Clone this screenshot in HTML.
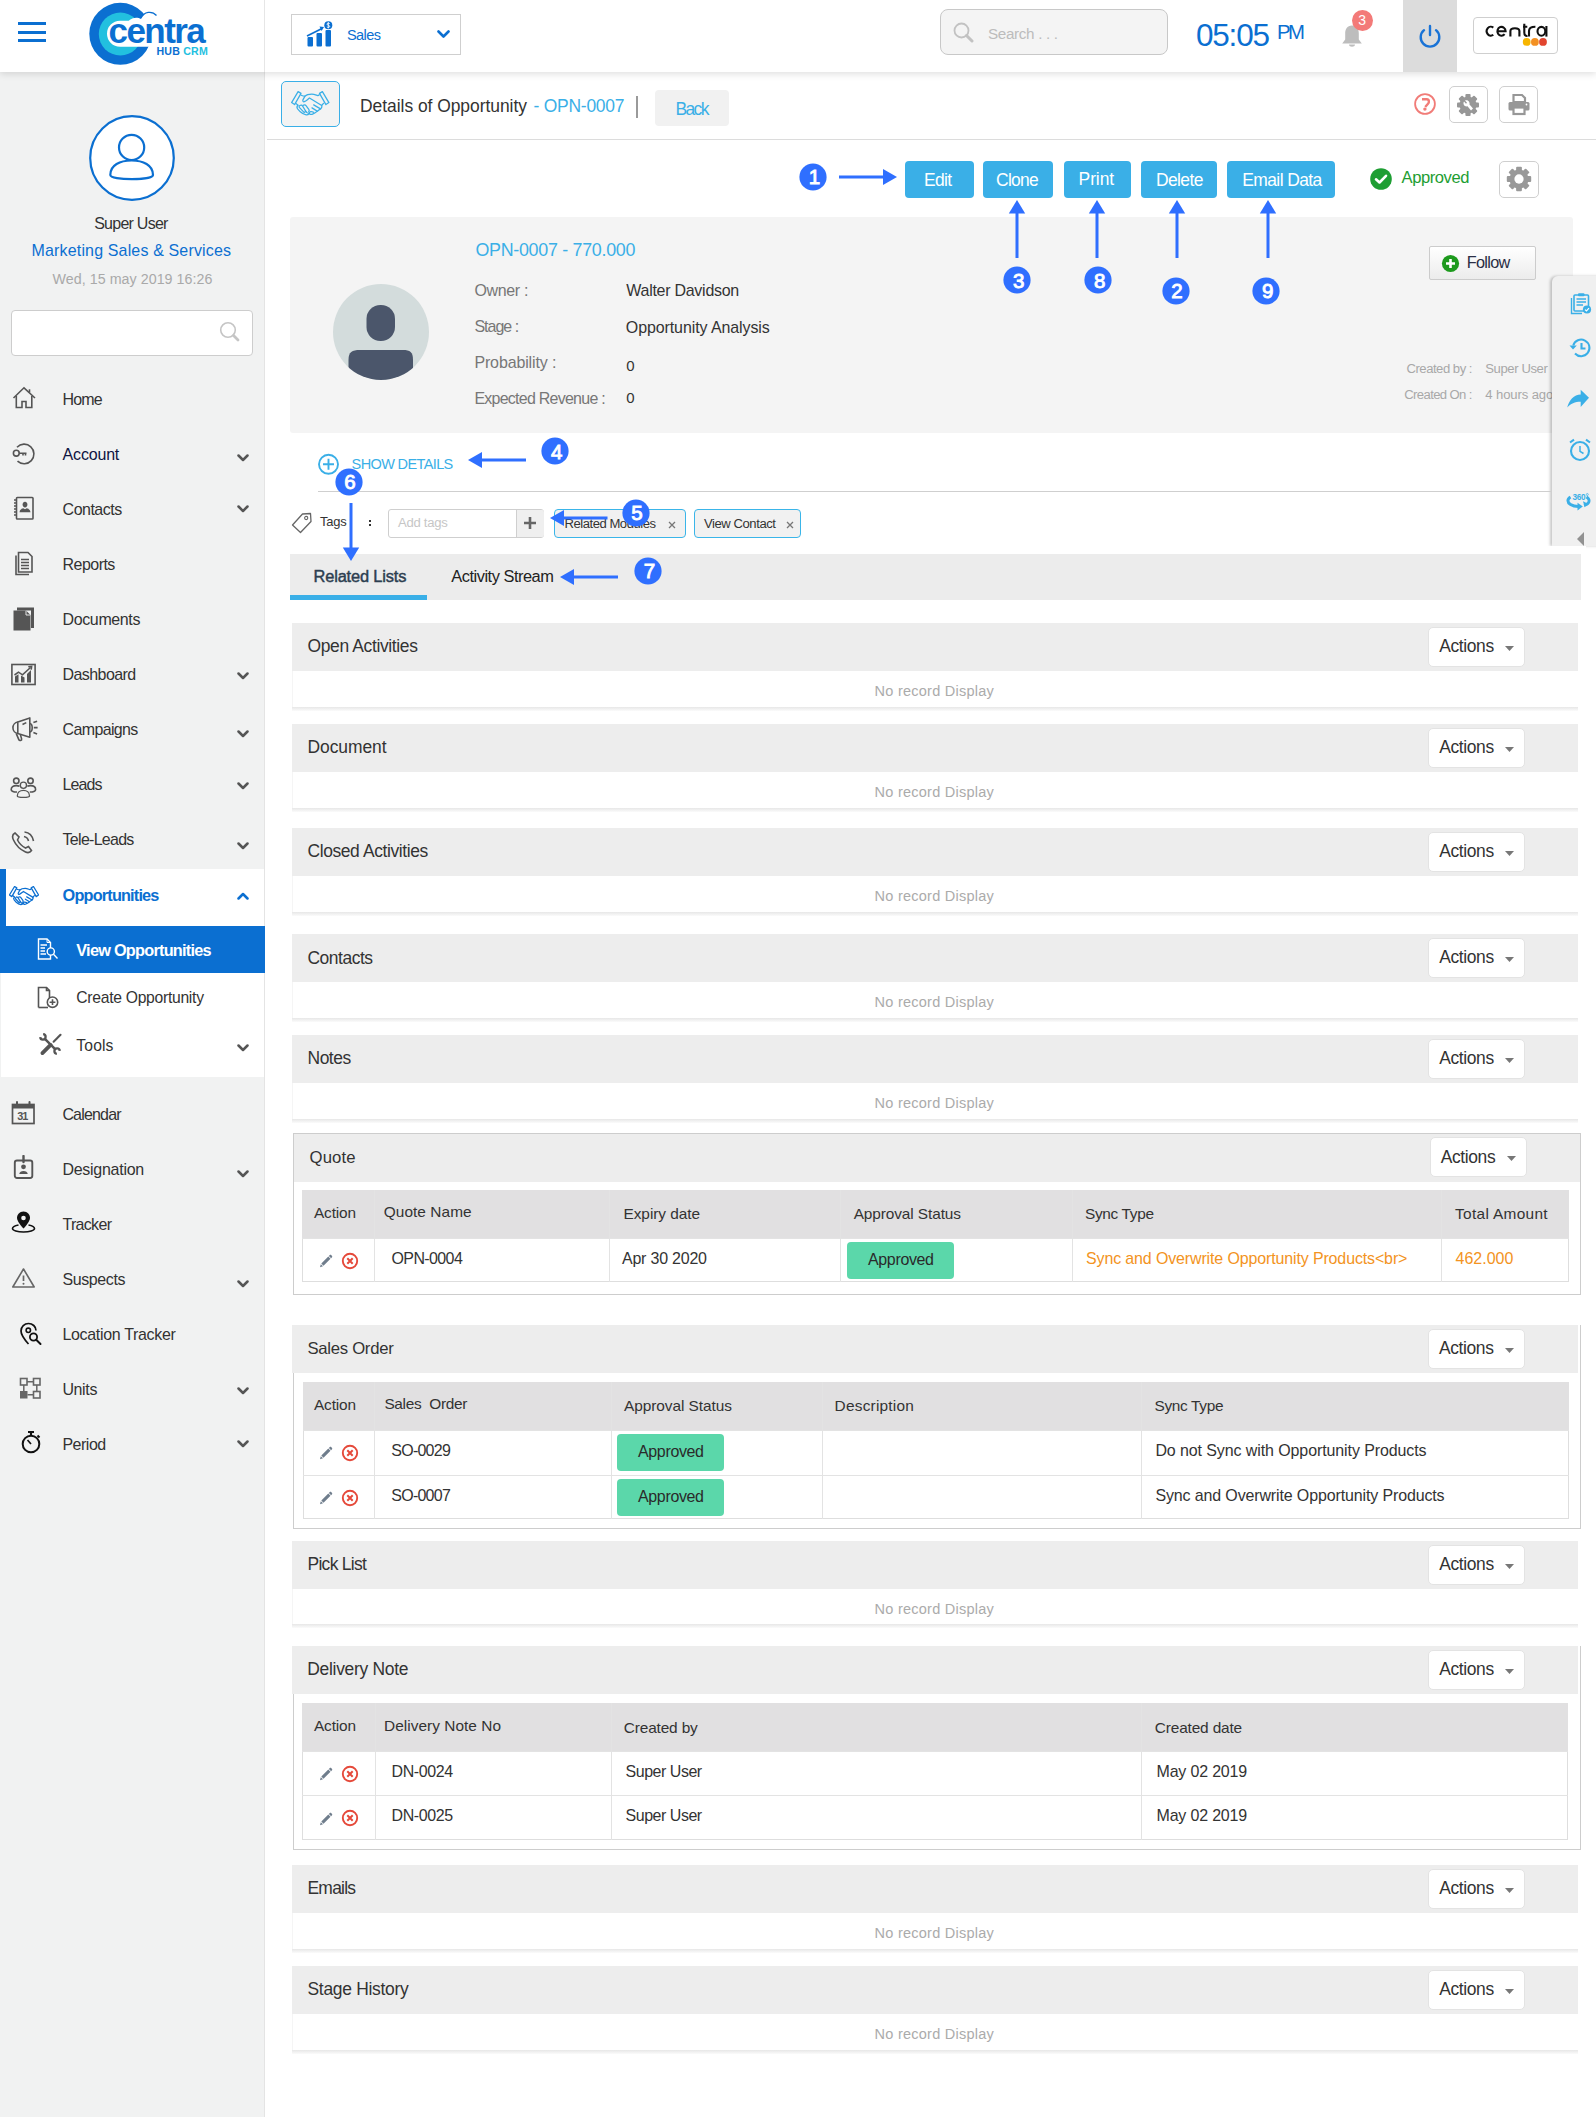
<!DOCTYPE html>
<html><head><meta charset="utf-8"><title>Details of Opportunity</title><style>
*{box-sizing:border-box;margin:0;padding:0}
html,body{width:1596px;height:2117px;overflow:hidden;background:#fff}
body{position:relative;font-family:"Liberation Sans",sans-serif}
.a{position:absolute}
.t{position:absolute;white-space:pre;line-height:1}
</style></head><body>
<div class="a" style="left:0px;top:72px;width:265px;height:2045px;background:#f1f2f2;border-right:1px solid #e4e4e4;"></div>
<div class="a" style="left:0px;top:0px;width:1596px;height:72px;background:#fff;box-shadow:0 2px 7px rgba(0,0,0,0.13);z-index:2;"></div>
<div class="a" style="left:264px;top:0;width:1px;height:72px;background:#e6e6e6;z-index:3"></div>
<div class="a" style="left:18px;top:22px;width:28px;height:3px;background:#0b6fd1;z-index:3"></div>
<div class="a" style="left:18px;top:30.5px;width:28px;height:3px;background:#0b6fd1;z-index:3"></div>
<div class="a" style="left:18px;top:39px;width:28px;height:3px;background:#0b6fd1;z-index:3"></div>
<svg class="a" style="left:86px;top:0px;z-index:3" width="128" height="68" viewBox="0 0 128 68">
<circle cx="34.3" cy="33.8" r="31" fill="#0b6fd1"/>
<circle cx="34.3" cy="34" r="21.5" fill="#22c0df"/>
<path d="M34 20.8 H70 V46.8 H34 A13 13 0 0 1 34 20.8 Z" fill="#fff"/>
<path d="M40 26 C42 18 50 16 55 19 C58 11 68 10 72 16 L75 26 Z" fill="#fff"/>
<path d="M55 18 C58 11.5 66 10.5 70.5 15.5" fill="none" stroke="#0b6fd1" stroke-width="1.3"/>
<path d="M64 46.8 H72 C70 49 66 50 64 50 Z" fill="#fff"/>
</svg>
<div class="t" style="left:108.5px;top:12.5px;font-size:35px;font-weight:bold;color:#0b6fd1;letter-spacing:-1.55px;z-index:3">centra</div>
<div class="t" style="left:156.5px;top:45.6px;font-size:10.6px;font-weight:bold;color:#0b6fd1;letter-spacing:0.2px;z-index:3">HUB <span style="color:#22c0df">CRM</span></div>
<div class="a" style="left:291px;top:14px;width:170px;height:41px;border:1px solid #cfcfcf;background:#fff;z-index:3;"></div>
<svg class="a" style="left:306px;top:21px;z-index:3" width="27" height="28" viewBox="0 0 27 28">
<rect x="1.5" y="16" width="5.5" height="9.5" rx="1" fill="#0b6fd1"/>
<rect x="10.5" y="12" width="5.5" height="13.5" rx="1" fill="#0b6fd1"/>
<rect x="19.5" y="9" width="5.5" height="16.5" rx="1" fill="#0b6fd1"/>
<path d="M1 15 L16 7.5" stroke="#0b6fd1" stroke-width="1.6" fill="none"/>
<path d="M13.5 5.5 L18 6 L15.5 10 Z" fill="#0b6fd1"/>
<circle cx="22.3" cy="4.3" r="4" fill="#0b6fd1"/>
<path d="M23.7 2.6 C23 1.8 21 1.9 21 3.2 C21 4.5 23.7 4 23.7 5.4 C23.7 6.6 21.6 6.7 20.9 5.9 M22.3 1.2 V7.4" stroke="#fff" stroke-width="0.9" fill="none"/>
</svg>
<div class="t" style="left:347.00px;top:28.00px;font-size:14.53px;color:#0b6fd1;letter-spacing:-0.593px;z-index:3;">Sales</div>
<svg class="a" style="left:437px;top:30px;z-index:3" width="13" height="9" viewBox="0 0 13 9"><path d="M1.5 1.5 L6.5 6.5 L11.5 1.5" stroke="#0b6fd1" stroke-width="2.6" fill="none" stroke-linecap="round" stroke-linejoin="round"/></svg>
<div class="a" style="left:940px;top:9px;width:228px;height:46px;border:1px solid #c8c8c8;background:#f4f4f4;border-radius:8px;z-index:3;"></div>
<svg class="a" style="left:953px;top:22px;z-index:3" width="22" height="21" viewBox="0 0 22 21"><circle cx="8.5" cy="8.5" r="7" stroke="#c2c2c2" stroke-width="1.8" fill="none"/><path d="M13.5 13.5 L19 19" stroke="#c2c2c2" stroke-width="3" stroke-linecap="round"/></svg>
<div class="t" style="left:988.00px;top:26.00px;font-size:15.26px;color:#bcbcbc;letter-spacing:-0.345px;z-index:3;">Search . . .</div>
<div class="t" style="left:1196.00px;top:20.00px;font-size:31.50px;color:#0b6fd1;letter-spacing:-1.207px;z-index:3;">05:05</div>
<div class="t" style="left:1277.00px;top:22.00px;font-size:20.35px;color:#0b6fd1;letter-spacing:-2.523px;z-index:3;">PM</div>
<svg class="a" style="left:1340px;top:24px;z-index:3" width="26" height="25" viewBox="0 0 26 25">
<path d="M12 1.5 C7 1.5 5.2 5.5 5.2 9.5 V15.5 L2.2 19.5 H21.8 L18.8 15.5 V9.5 C18.8 5.5 17 1.5 12 1.5 Z" fill="#bdbdbd"/>
<path d="M9 20.5 C9 23.5 15 23.5 15 20.5 Z" fill="#bdbdbd"/>
</svg>
<div class="a" style="left:1351.5px;top:9.5px;width:21px;height:21px;background:#f37a78;border-radius:50%;z-index:4;"></div>
<div class="t" style="left:1358.30px;top:13.00px;font-size:14.00px;color:#fff;z-index:5;">3</div>
<div class="a" style="left:1403px;top:0px;width:54px;height:72px;background:#dcdcdc;z-index:3;"></div>
<svg class="a" style="left:1418px;top:24px;z-index:4" width="24" height="24" viewBox="0 0 24 24"><path d="M6 6.2 A9.3 9.3 0 1 0 18 6.2" stroke="#1a73d6" stroke-width="2.4" fill="none" stroke-linecap="round"/><path d="M12 2 V11" stroke="#1a73d6" stroke-width="2.4" stroke-linecap="round"/></svg>
<div class="a" style="left:1472.5px;top:17px;width:85px;height:36.5px;border:1px solid #cfcfcf;border-radius:4px;background:#fff;z-index:3;"></div>
<svg class="a" style="left:1472.5px;top:17px;z-index:4" width="85" height="36" viewBox="0 0 85 36"><g fill="none" stroke="#111" stroke-width="2.1" stroke-linecap="butt"><path d="M20.3 10.6 A4.1 4.5 0 1 0 20.3 17.8"/><path d="M24.4 14.2 H32.6 A4.1 4.4 0 1 0 31.6 17.2"/><path d="M37.4 19.6 V14 C37.4 10.3 46.4 10.3 46.4 14 V19.6"/><path d="M50 9.8 H54.3 M51.3 6.8 V15.5 C51.3 18 52.5 19.2 54.5 19"/><path d="M56 19.6 V14 C56 11 58.5 9.8 62.4 9.8"/><ellipse cx="68.4" cy="14.3" rx="3.9" ry="4.4"/><path d="M73.4 9 V19.6"/></g></svg>
<svg class="a" style="left:1521px;top:36px;z-index:4" width="28" height="12" viewBox="0 0 28 12"><circle cx="5.7" cy="5.9" r="3.9" fill="#f7b500"/><circle cx="13.9" cy="5.9" r="3.9" fill="#f39022"/><circle cx="22" cy="5.9" r="3.9" fill="#e2452f"/></svg>
<svg class="a" style="left:88px;top:114px;" width="88" height="88" viewBox="0 0 88 88">
<circle cx="44" cy="44" r="41.8" fill="#fff" stroke="#0b6fd1" stroke-width="2.2"/>
<circle cx="43.6" cy="33.4" r="12.6" fill="none" stroke="#0b6fd1" stroke-width="2.2"/>
<path d="M22.3 61 C22.3 51 32 46.5 43.6 46.5 C55 46.5 65 51 65 61 C65 66.5 22.3 66.5 22.3 61 Z" fill="none" stroke="#0b6fd1" stroke-width="2.2"/>
</svg>
<div class="t" style="left:94.20px;top:216.00px;font-size:15.99px;color:#333;letter-spacing:-0.740px;">Super User</div>
<div class="t" style="left:31.60px;top:243.00px;font-size:15.99px;color:#0b6fd1;letter-spacing:0.156px;">Marketing Sales &amp; Services</div>
<div class="t" style="left:52.50px;top:272.00px;font-size:14.24px;color:#a9a9a9;letter-spacing:0.053px;">Wed, 15 may 2019 16:26</div>
<div class="a" style="left:11px;top:310px;width:242px;height:46px;border:1px solid #cdcdcd;border-radius:4px;background:#fff;"></div>
<svg class="a" style="left:219px;top:321px;" width="22" height="22" viewBox="0 0 22 22"><circle cx="9" cy="9" r="7.3" stroke="#c5c5c5" stroke-width="1.6" fill="none"/><path d="M14.5 14.5 L19 19" stroke="#c5c5c5" stroke-width="2.8" stroke-linecap="round"/></svg>
<div class="t" style="left:62.60px;top:392.00px;font-size:15.99px;color:#333;letter-spacing:-0.883px;">Home</div>
<div class="t" style="left:62.60px;top:447.00px;font-size:15.99px;color:#0f1442;letter-spacing:-0.176px;">Account</div>
<svg class="a" style="left:237px;top:453.5px;" width="12" height="8" viewBox="0 0 12 8"><path d="M1.5 1.5 L6 6 L10.5 1.5" stroke="#555" stroke-width="2.5" fill="none" stroke-linecap="round" stroke-linejoin="round"/></svg>
<div class="t" style="left:62.60px;top:502.00px;font-size:15.99px;color:#333;letter-spacing:-0.502px;">Contacts</div>
<svg class="a" style="left:237px;top:505.1px;" width="12" height="8" viewBox="0 0 12 8"><path d="M1.5 1.5 L6 6 L10.5 1.5" stroke="#555" stroke-width="2.5" fill="none" stroke-linecap="round" stroke-linejoin="round"/></svg>
<div class="t" style="left:62.60px;top:557.00px;font-size:15.99px;color:#333;letter-spacing:-0.533px;">Reports</div>
<div class="t" style="left:62.60px;top:612.00px;font-size:15.99px;color:#333;letter-spacing:-0.383px;">Documents</div>
<div class="t" style="left:62.60px;top:667.00px;font-size:15.99px;color:#333;letter-spacing:-0.578px;">Dashboard</div>
<svg class="a" style="left:237px;top:671.7px;" width="12" height="8" viewBox="0 0 12 8"><path d="M1.5 1.5 L6 6 L10.5 1.5" stroke="#555" stroke-width="2.5" fill="none" stroke-linecap="round" stroke-linejoin="round"/></svg>
<div class="t" style="left:62.60px;top:722.00px;font-size:15.99px;color:#333;letter-spacing:-0.645px;">Campaigns</div>
<svg class="a" style="left:237px;top:730.1px;" width="12" height="8" viewBox="0 0 12 8"><path d="M1.5 1.5 L6 6 L10.5 1.5" stroke="#555" stroke-width="2.5" fill="none" stroke-linecap="round" stroke-linejoin="round"/></svg>
<div class="t" style="left:62.60px;top:777.00px;font-size:15.99px;color:#333;letter-spacing:-0.942px;">Leads</div>
<svg class="a" style="left:237px;top:782.2px;" width="12" height="8" viewBox="0 0 12 8"><path d="M1.5 1.5 L6 6 L10.5 1.5" stroke="#555" stroke-width="2.5" fill="none" stroke-linecap="round" stroke-linejoin="round"/></svg>
<div class="t" style="left:62.60px;top:832.00px;font-size:15.99px;color:#333;letter-spacing:-0.714px;">Tele-Leads</div>
<svg class="a" style="left:237px;top:842.3px;" width="12" height="8" viewBox="0 0 12 8"><path d="M1.5 1.5 L6 6 L10.5 1.5" stroke="#555" stroke-width="2.5" fill="none" stroke-linecap="round" stroke-linejoin="round"/></svg>
<div class="t" style="left:62.40px;top:1107.00px;font-size:15.99px;color:#333;letter-spacing:-0.810px;">Calendar</div>
<div class="t" style="left:62.40px;top:1162.00px;font-size:15.99px;color:#333;letter-spacing:-0.256px;">Designation</div>
<svg class="a" style="left:237px;top:1170.3px;" width="12" height="8" viewBox="0 0 12 8"><path d="M1.5 1.5 L6 6 L10.5 1.5" stroke="#555" stroke-width="2.5" fill="none" stroke-linecap="round" stroke-linejoin="round"/></svg>
<div class="t" style="left:62.40px;top:1217.00px;font-size:15.99px;color:#333;letter-spacing:-0.667px;">Tracker</div>
<div class="t" style="left:62.40px;top:1272.00px;font-size:15.99px;color:#333;letter-spacing:-0.379px;">Suspects</div>
<svg class="a" style="left:237px;top:1279.7px;" width="12" height="8" viewBox="0 0 12 8"><path d="M1.5 1.5 L6 6 L10.5 1.5" stroke="#555" stroke-width="2.5" fill="none" stroke-linecap="round" stroke-linejoin="round"/></svg>
<div class="t" style="left:62.40px;top:1327.00px;font-size:15.99px;color:#333;letter-spacing:-0.313px;">Location Tracker</div>
<div class="t" style="left:62.40px;top:1382.00px;font-size:15.99px;color:#333;letter-spacing:-0.353px;">Units</div>
<svg class="a" style="left:237px;top:1387.3px;" width="12" height="8" viewBox="0 0 12 8"><path d="M1.5 1.5 L6 6 L10.5 1.5" stroke="#555" stroke-width="2.5" fill="none" stroke-linecap="round" stroke-linejoin="round"/></svg>
<div class="t" style="left:62.40px;top:1437.00px;font-size:15.99px;color:#333;letter-spacing:-0.481px;">Period</div>
<svg class="a" style="left:237px;top:1439.7px;" width="12" height="8" viewBox="0 0 12 8"><path d="M1.5 1.5 L6 6 L10.5 1.5" stroke="#555" stroke-width="2.5" fill="none" stroke-linecap="round" stroke-linejoin="round"/></svg>
<div class="a" style="left:1px;top:869px;width:263px;height:208px;background:#fff;"></div>
<div class="a" style="left:0px;top:869px;width:6px;height:57px;background:#0b6fd1;"></div>
<div class="a" style="left:0px;top:926px;width:265px;height:47px;background:#0b6fd1;"></div>
<div class="t" style="left:62.60px;top:887.00px;font-size:16.30px;color:#0b6fd1;letter-spacing:-0.829px;font-weight:bold;">Opportunities</div>
<svg class="a" style="left:237px;top:891.7px;" width="12" height="8" viewBox="0 0 12 8"><path d="M1.5 6.5 L6 2 L10.5 6.5" stroke="#0b6fd1" stroke-width="2.5" fill="none" stroke-linecap="round" stroke-linejoin="round"/></svg>
<div class="t" style="left:76.30px;top:942.00px;font-size:16.30px;color:#fff;letter-spacing:-0.750px;font-weight:bold;">View Opportunities</div>
<div class="t" style="left:76.30px;top:990.00px;font-size:15.70px;color:#333;letter-spacing:-0.285px;">Create Opportunity</div>
<div class="t" style="left:76.30px;top:1038.00px;font-size:15.70px;color:#333;letter-spacing:0.136px;">Tools</div>
<svg class="a" style="left:237px;top:1044.3px;" width="12" height="8" viewBox="0 0 12 8"><path d="M1.5 1.5 L6 6 L10.5 1.5" stroke="#555" stroke-width="2.5" fill="none" stroke-linecap="round" stroke-linejoin="round"/></svg>
<svg class="a" style="left:12px;top:386px;" width="25" height="24" viewBox="0 0 25 24"><path d="M1.5 12 L12 1.8 L23 12" stroke="#555" fill="none" stroke-width="1.6" stroke-width="1.7"/><path d="M17.5 6.5 V3.3" stroke="#555" fill="none" stroke-width="1.6"/><path d="M4.3 10 V21.5 H10 V15.5 H14 V21.5 H19.8 V10" stroke="#555" fill="none" stroke-width="1.6" stroke-width="2.2"/></svg>
<svg class="a" style="left:12px;top:442px;" width="24" height="24" viewBox="0 0 24 24"><path d="M5 5.2 A9.8 9.8 0 1 1 5.5 19.2" stroke="#555" fill="none" stroke-width="1.6" stroke-width="2"/><circle cx="4.3" cy="11.2" r="2.9" stroke="#555" fill="none" stroke-width="1.6" stroke-width="1.8"/><path d="M7.2 11.2 H14.5 M11 11.2 V13.5 M13.5 11.2 V13.5" stroke="#555" fill="none" stroke-width="1.6" stroke-width="1.8"/></svg>
<svg class="a" style="left:13px;top:496px;" width="22" height="25" viewBox="0 0 22 25"><rect x="3.5" y="1.5" width="16.5" height="21.5" rx="0.8" stroke="#555" fill="none" stroke-width="1.6" stroke-width="1.9"/><path d="M1 4 H4 M1 7 H4 M1 10 H4 M1 13 H4 M1 16 H4 M1 19 H4" stroke="#555" fill="none" stroke-width="1.6" stroke-width="1.2"/><path d="M12 5.8 C10.3 5.8 9.6 7.2 9.6 8.6 C9.6 10.2 10.5 11.5 12 11.5 C13.5 11.5 14.4 10.2 14.4 8.6 C14.4 7.2 13.7 5.8 12 5.8 Z" fill="#555"/><path d="M6.5 16.3 C6.8 13.5 8.5 12.6 10.3 12.2 L12 13.3 L13.7 12.2 C15.5 12.6 17.2 13.5 17.5 16.3 Z" fill="#555"/></svg>
<svg class="a" style="left:13px;top:551px;" width="22" height="26" viewBox="0 0 22 26"><path d="M3 4.5 V23.5 H16" stroke="#555" fill="none" stroke-width="1.6" stroke-width="1.4"/><path d="M5.5 1.5 H15 L19 5.5 V21 H5.5 Z" stroke="#555" fill="none" stroke-width="1.6" stroke-width="1.5"/><path d="M8 8.5 H16 M8 11.5 H16 M8 14.5 H16 M8 17.5 H16" stroke="#555" fill="none" stroke-width="1.6" stroke-width="1.3"/></svg>
<svg class="a" style="left:13px;top:606px;" width="22" height="25" viewBox="0 0 22 25"><path d="M4 1.5 H21 V22 H18 V4.5 H4 Z" fill="#555"/><path d="M0.5 4.5 H13 L17.5 9 V24.5 H0.5 Z" fill="#555"/><path d="M13 4.8 V9 H17.3" fill="none" stroke="#f1f2f2" stroke-width="0.9"/></svg>
<svg class="a" style="left:10px;top:663px;" width="27" height="23" viewBox="0 0 27 23"><rect x="1.9" y="1.5" width="23.2" height="20" stroke="#555" fill="none" stroke-width="1.6" stroke-width="1.9"/><path d="M5 19.5 V13.5 L8.5 11.2 V19.5 Z M11 19.5 V12.5 L14.5 14.5 V19.5 Z M17 19.5 V11 L21 7 V19.5 Z" fill="#555"/><path d="M4.5 12 L8.5 9.2 L12.5 11.8 L20.5 4.5" stroke="#555" fill="none" stroke-width="1.6" stroke-width="1.1"/><path d="M18.3 3.8 L21.6 3.4 L21.2 6.7" stroke="#555" fill="none" stroke-width="1.6" stroke-width="1.1"/></svg>
<svg class="a" style="left:9px;top:716px;" width="31" height="27" viewBox="0 0 31 27"><path d="M8.8 6 A5.6 5.8 0 0 0 8.8 17.5" stroke="#555" fill="none" stroke-width="1.6" stroke-width="1.5"/><path d="M8.8 6 L20.8 1.9 V21.2 L8.8 17.5 Z" stroke="#555" fill="none" stroke-width="1.6" stroke-width="1.5" stroke-linejoin="round"/><path d="M20.8 7.5 C24 8 24 15.5 20.8 16" stroke="#555" fill="none" stroke-width="1.6" stroke-width="1.4"/><path d="M24.4 6.6 L28.1 5.2 M24.8 11.6 H28.6 M24.4 16.5 L28.1 17.9" stroke="#555" fill="none" stroke-width="1.6" stroke-width="1.4"/><path d="M7.3 17.6 L9.8 23.6 C10.5 25.2 13 24.6 12.6 22.9 L11.4 18.6" stroke="#555" fill="none" stroke-width="1.6" stroke-width="1.4"/><path d="M13.5 8.5 L17.3 6.6" stroke="#555" fill="none" stroke-width="1.6" stroke-width="1.2"/></svg>
<svg class="a" style="left:10px;top:772px;" width="28" height="28" viewBox="0 0 28 28"><circle cx="6.3" cy="8.8" r="2.7" stroke="#555" fill="none" stroke-width="1.6" stroke-width="1.3"/><circle cx="20.5" cy="8.8" r="2.7" stroke="#555" fill="none" stroke-width="1.6" stroke-width="1.3"/><path d="M9.5 14.3 C8.5 13.8 7.5 13.6 6.3 13.6 C3.2 13.6 1.2 15.3 1.2 17.4 C1.2 19.2 3.5 20 7 20" stroke="#555" fill="none" stroke-width="1.6" stroke-width="1.3"/><path d="M17.3 14.3 C18.3 13.8 19.3 13.6 20.5 13.6 C23.6 13.6 25.6 15.3 25.6 17.4 C25.6 19.2 23.3 20 19.8 20" stroke="#555" fill="none" stroke-width="1.6" stroke-width="1.3"/><circle cx="13.4" cy="13.2" r="3.1" fill="#f1f2f2" stroke="#555" stroke-width="1.3"/><path d="M7.3 24 C7.3 20.5 10 18.3 13.4 18.3 C16.8 18.3 19.5 20.5 19.5 24 C19.5 25.8 7.3 25.8 7.3 24 Z" fill="#f1f2f2" stroke="#555" stroke-width="1.3"/></svg>
<svg class="a" style="left:11px;top:829.5px;" width="24" height="25" viewBox="0 0 24 25"><path d="M4 3 C2 4 0.8 6.5 2.5 10 C5 15.5 9 19.5 14.5 22 C17.5 23.3 19.5 22 20.5 20.5 L17.5 16.5 L14.5 18 C11.5 16.5 8 13 6.5 10 L8 7 Z" stroke="#555" fill="none" stroke-width="1.6" stroke-width="1.4"/><path d="M13 6.5 C15.5 7 17 8.5 17.5 11" stroke="#555" fill="none" stroke-width="1.6" stroke-width="1.4"/><path d="M13.5 2 C18 2.5 21.5 6 22.5 11" stroke="#555" fill="none" stroke-width="1.6" stroke-width="1.4"/></svg>
<svg class="a" style="left:8.6px;top:886.2px;" width="30.42" height="19.5" viewBox="0 0 30.42 19.5"><g transform="scale(0.78)" stroke="#0b6fd1" fill="none" stroke-width="1.6" stroke-linejoin="round" stroke-linecap="round">
<path d="M7.1 0.6 L10 2.4 L3.6 13.6 L0.6 11.6 Z"/>
<path d="M31.4 0.6 L28.5 2.4 L34.9 13.6 L37.9 11.6 Z"/>
<path d="M10.2 4.2 C11.5 4.8 12.8 5.1 14 5.1 C15.5 3.6 18 3.1 20.8 3.1 C23.5 3.1 25.5 4.4 26.8 4.7 C27.5 4.6 27.9 4.2 28.3 3.8"/>
<path d="M14 5.1 L11.9 8.9 C11.5 10 12.3 11 13.3 10.7 C15 10.2 16.5 8.5 18.5 7 L30.3 14.3 C31.3 15 31 16.6 29.6 17.9"/>
<path d="M32.5 12.3 L30.6 14.5"/>
<path d="M29.6 17.9 C28.2 18.5 27.3 19.6 26.1 20.4 C24.8 21.6 23.2 22.6 21 23.4 C19.6 23.7 18.4 23.2 18.4 22.3 C18.4 20.6 20.2 19.9 22.6 21.3"/>
<path d="M22.7 13.9 L29.1 17.6 M21 16.9 L26.2 20.1"/>
<path d="M5.2 12.6 L6.9 14.2"/>
<path d="M6.9 14.2 C5.8 15.3 5.7 16.6 6.6 17.8 L9.3 20.8 C11.2 22.6 13.6 23.7 15.2 23.9 C16.4 24 17.6 23.3 18.4 22.3"/>
<path d="M8.9 14.6 C9.8 13.8 10.9 14 11.5 14.9 L14.3 19.5 C14.9 20.6 13.9 21.7 12.8 21.1 L8.3 16.4 C7.8 15.8 8.2 15.1 8.9 14.6 Z"/>
<path d="M12.3 14.3 C13 13.6 14.3 13.7 15 14.6 L17.8 18.3 C18.4 19.2 18.3 20.2 17.6 20.9"/>
<path d="M14.5 19.8 L15.8 21.5 C16.3 22.2 17.5 22.3 18.4 22.3"/>
</g></svg>
<svg class="a" style="left:37px;top:938px;" width="23" height="22" viewBox="0 0 23 22"><path d="M1.5 1 H10 L13.5 4.5 V21 H1.5 Z" stroke="#fff" fill="none" stroke-width="1.4"/><path d="M10 1 V4.5 H13.5" stroke="#fff" fill="none" stroke-width="1"/><path d="M3.5 7 H10 M3.5 10 H8 M3.5 13 H8 M3.5 16 H9" stroke="#fff" stroke-width="1.3"/><circle cx="13.8" cy="13.5" r="3.6" stroke="#fff" fill="#0b6fd1" stroke-width="1.4"/><path d="M16.5 16.3 L20.5 20.5" stroke="#fff" stroke-width="1.4"/></svg>
<svg class="a" style="left:37px;top:986px;" width="23" height="23" viewBox="0 0 23 23"><path d="M1.5 21.5 V1.5 H9.5 L12.5 4.5 V12" stroke="#555" fill="none" stroke-width="1.6" stroke-width="1.4"/><path d="M9.5 1.5 V4.5 H12.5" stroke="#555" fill="none" stroke-width="1.6" stroke-width="1"/><path d="M11 21.5 H1.5" stroke="#555" fill="none" stroke-width="1.6" stroke-width="1.4"/><circle cx="15.5" cy="16.2" r="5.2" stroke="#555" fill="none" stroke-width="1.6" stroke-width="1.4"/><path d="M15.5 13.3 V19.1 M12.6 16.2 H18.4" stroke="#555" fill="none" stroke-width="1.6" stroke-width="1.3"/></svg>
<svg class="a" style="left:39px;top:1033px;" width="23" height="23" viewBox="0 0 23 23"><path d="M21.5 1.8 L14.6 8.7" stroke="#555" stroke-width="2.1" stroke-linecap="round"/><path d="M11.6 11.9 L3.4 20.1" stroke="#555" stroke-width="3.8" stroke-linecap="round"/><path d="M5.6 5.6 L16.4 16.4" stroke="#555" stroke-width="2.5"/><path d="M4.13 1.21 A2.7 2.7 0 1 1 1.21 4.14" fill="none" stroke="#555" stroke-width="2.3"/><path d="M17.86 20.79 A2.7 2.7 0 1 1 20.79 17.86" fill="none" stroke="#555" stroke-width="2.3"/></svg>
<svg class="a" style="left:11px;top:1101px;" width="25" height="24" viewBox="0 0 25 24"><rect x="1.5" y="3.5" width="21.5" height="19" fill="none" stroke="#555" stroke-width="1.7"/><rect x="1.5" y="3.5" width="21.5" height="4" fill="#555"/><path d="M6 1 V5 M18.5 1 V5" stroke="#555" stroke-width="2" stroke-linecap="round"/></svg>
<div class="t" style="left:17.30px;top:1111.00px;font-size:10.90px;color:#555;letter-spacing:-1.128px;font-weight:bold;">31</div>
<svg class="a" style="left:13px;top:1155px;" width="22" height="25" viewBox="0 0 22 25"><rect x="1.8" y="5.5" width="17.5" height="17.5" rx="2.2" fill="none" stroke="#555" stroke-width="1.9"/><path d="M10.5 1 V7" stroke="#555" stroke-width="2.4" stroke-linecap="round"/><circle cx="10.5" cy="11.8" r="2.4" fill="#555"/><path d="M6.3 19 C6.3 15 14.7 15 14.7 19 Z" fill="#555"/></svg>
<svg class="a" style="left:11px;top:1210px;" width="25" height="25" viewBox="0 0 25 25"><path d="M12.5 1.5 C8.5 1.5 6 4.5 6 8 C6 12 12.5 18.5 12.5 18.5 C12.5 18.5 19 12 19 8 C19 4.5 16.5 1.5 12.5 1.5 Z" fill="#111"/><circle cx="12.5" cy="8" r="2.3" fill="#f1f2f2"/><path d="M7.5 15 C3.5 15.8 1.5 17 1.5 18.5 C1.5 20.5 6.5 22 12.5 22 C18.5 22 23.5 20.5 23.5 18.5 C23.5 17 21.5 15.8 17.5 15" fill="none" stroke="#111" stroke-width="1.6"/></svg>
<svg class="a" style="left:11px;top:1267px;" width="25" height="22" viewBox="0 0 25 22"><path d="M12.5 2 L1.8 20 H23.2 Z" fill="none" stroke="#666" stroke-width="1.6" stroke-linejoin="round"/><path d="M12.5 8.5 V14" stroke="#666" stroke-width="1.7"/><circle cx="12.5" cy="16.8" r="1" fill="#666"/></svg>
<svg class="a" style="left:19px;top:1322px;" width="25" height="25" viewBox="0 0 25 25"><path d="M9.5 22 C5 17 2 13 2 9 C2 4.5 5.5 1.5 9.5 1.5 C13.5 1.5 17 4.5 17 8.5" fill="none" stroke="#111" stroke-width="1.7"/><circle cx="9.3" cy="8.3" r="2.2" fill="none" stroke="#111" stroke-width="1.6"/><circle cx="14.5" cy="15" r="3.6" fill="none" stroke="#111" stroke-width="1.8"/><path d="M17.2 17.8 L21.5 22" stroke="#111" stroke-width="2" stroke-linecap="round"/></svg>
<svg class="a" style="left:19px;top:1377px;" width="25" height="25" viewBox="0 0 25 25"><rect x="1.5" y="1.5" width="6.5" height="6.5" fill="none" stroke="#666" stroke-width="1.6"/><rect x="14.5" y="1.5" width="6.5" height="6.5" fill="none" stroke="#666" stroke-width="1.6"/><rect x="1" y="14" width="7.5" height="7.5" fill="#666"/><rect x="14.5" y="14.5" width="6.5" height="6.5" fill="none" stroke="#666" stroke-width="1.6"/><path d="M8 4.8 H14.5 M4.8 8 V14 M17.8 8 V14.5 M8.5 17.8 H14.5" stroke="#666" stroke-width="1.5"/></svg>
<svg class="a" style="left:20px;top:1430px;" width="24" height="25" viewBox="0 0 24 25"><circle cx="11" cy="14" r="8.3" fill="none" stroke="#111" stroke-width="2"/><path d="M8 2 H14 M11 2 V5.5" stroke="#111" stroke-width="2.2"/><path d="M17.5 5.5 L19.5 7.5" stroke="#111" stroke-width="2"/><path d="M11 14 L7.5 10" stroke="#111" stroke-width="1.6"/></svg>
<div class="a" style="left:281px;top:81px;width:59px;height:46px;border:1.5px solid #3aafe7;border-radius:5px;background:#f3f3f3;"></div>
<svg class="a" style="left:291px;top:91px;" width="39.0" height="25.0" viewBox="0 0 39.0 25.0"><g transform="scale(1.0)" stroke="#3aafe7" fill="none" stroke-width="1.25" stroke-linejoin="round" stroke-linecap="round">
<path d="M7.1 0.6 L10 2.4 L3.6 13.6 L0.6 11.6 Z"/>
<path d="M31.4 0.6 L28.5 2.4 L34.9 13.6 L37.9 11.6 Z"/>
<path d="M10.2 4.2 C11.5 4.8 12.8 5.1 14 5.1 C15.5 3.6 18 3.1 20.8 3.1 C23.5 3.1 25.5 4.4 26.8 4.7 C27.5 4.6 27.9 4.2 28.3 3.8"/>
<path d="M14 5.1 L11.9 8.9 C11.5 10 12.3 11 13.3 10.7 C15 10.2 16.5 8.5 18.5 7 L30.3 14.3 C31.3 15 31 16.6 29.6 17.9"/>
<path d="M32.5 12.3 L30.6 14.5"/>
<path d="M29.6 17.9 C28.2 18.5 27.3 19.6 26.1 20.4 C24.8 21.6 23.2 22.6 21 23.4 C19.6 23.7 18.4 23.2 18.4 22.3 C18.4 20.6 20.2 19.9 22.6 21.3"/>
<path d="M22.7 13.9 L29.1 17.6 M21 16.9 L26.2 20.1"/>
<path d="M5.2 12.6 L6.9 14.2"/>
<path d="M6.9 14.2 C5.8 15.3 5.7 16.6 6.6 17.8 L9.3 20.8 C11.2 22.6 13.6 23.7 15.2 23.9 C16.4 24 17.6 23.3 18.4 22.3"/>
<path d="M8.9 14.6 C9.8 13.8 10.9 14 11.5 14.9 L14.3 19.5 C14.9 20.6 13.9 21.7 12.8 21.1 L8.3 16.4 C7.8 15.8 8.2 15.1 8.9 14.6 Z"/>
<path d="M12.3 14.3 C13 13.6 14.3 13.7 15 14.6 L17.8 18.3 C18.4 19.2 18.3 20.2 17.6 20.9"/>
<path d="M14.5 19.8 L15.8 21.5 C16.3 22.2 17.5 22.3 18.4 22.3"/>
</g></svg>
<div class="t" style="left:360.00px;top:98.00px;font-size:17.44px;color:#333;letter-spacing:-0.033px;">Details of Opportunity</div>
<div class="t" style="left:533.50px;top:98.00px;font-size:17.44px;color:#3aafe7;letter-spacing:-0.228px;">- OPN-0007</div>
<div class="a" style="left:636px;top:96px;width:2px;height:22px;background:#9a9a9a;"></div>
<div class="a" style="left:655px;top:90px;width:74px;height:36px;background:#f1f1f1;border-radius:4px;"></div>
<div class="t" style="left:675.50px;top:101.00px;font-size:17.44px;color:#3aafe7;letter-spacing:-1.603px;">Back</div>
<svg class="a" style="left:1413px;top:92px;" width="24" height="24" viewBox="0 0 24 24"><circle cx="12" cy="12" r="9.9" fill="none" stroke="#f17c78" stroke-width="1.8"/><path d="M9 7.3 H13.8 C16.3 7.3 16.4 10.2 15 11.8 L12.2 15" fill="none" stroke="#f17c78" stroke-width="2.4"/><circle cx="11.9" cy="17.1" r="1.7" fill="#f17c78"/></svg>
<div class="a" style="left:1449px;top:86px;width:39px;height:37px;border:1px solid #cfcfcf;border-radius:5px;background:#fff;"></div>
<div class="a" style="left:1499px;top:86px;width:39px;height:37px;border:1px solid #cfcfcf;border-radius:5px;background:#fff;"></div>
<svg class="a" style="left:1455px;top:92px;" width="26" height="26" viewBox="0 0 26 26"><rect x="10.40" y="2.00" width="5.20" height="5.50" rx="1" fill="#979797" transform="rotate(0 13 13)"/><rect x="10.40" y="2.00" width="5.20" height="5.50" rx="1" fill="#979797" transform="rotate(45 13 13)"/><rect x="10.40" y="2.00" width="5.20" height="5.50" rx="1" fill="#979797" transform="rotate(90 13 13)"/><rect x="10.40" y="2.00" width="5.20" height="5.50" rx="1" fill="#979797" transform="rotate(135 13 13)"/><rect x="10.40" y="2.00" width="5.20" height="5.50" rx="1" fill="#979797" transform="rotate(180 13 13)"/><rect x="10.40" y="2.00" width="5.20" height="5.50" rx="1" fill="#979797" transform="rotate(225 13 13)"/><rect x="10.40" y="2.00" width="5.20" height="5.50" rx="1" fill="#979797" transform="rotate(270 13 13)"/><rect x="10.40" y="2.00" width="5.20" height="5.50" rx="1" fill="#979797" transform="rotate(315 13 13)"/><circle cx="13" cy="13" r="8.58" fill="#979797"/><path d="M9 9.5 C7.5 12 9.5 15 12.5 14.3 L16 18.5 L18 16.5 L14.5 12.5 C15.3 9.5 12.3 7.3 10 8.5 L12 10.8 L11 11.8 Z" fill="#fff"/></svg>
<svg class="a" style="left:1506px;top:92px;" width="26" height="26" viewBox="0 0 26 26"><path d="M7.5 3 H16 L19 6 V10 H7.5 Z" fill="#fff" stroke="#979797" stroke-width="2.2"/><rect x="2.5" y="10" width="21" height="8.5" rx="1.5" fill="#979797"/><rect x="7.5" y="15.5" width="11" height="6.5" fill="#fff" stroke="#979797" stroke-width="2.2"/><circle cx="20.5" cy="12.5" r="0.9" fill="#fff"/></svg>
<div class="a" style="left:267px;top:139px;width:1329px;height:1px;background:#dcdcdc;"></div>
<div class="a" style="left:905px;top:161px;width:69px;height:37px;background:#3aafe7;border-radius:4px;"></div>
<div class="t" style="left:924.00px;top:172.00px;font-size:17.44px;color:#fff;letter-spacing:-0.681px;">Edit</div>
<div class="a" style="left:983px;top:161px;width:70px;height:37px;background:#3aafe7;border-radius:4px;"></div>
<div class="t" style="left:996.00px;top:172.00px;font-size:17.44px;color:#fff;letter-spacing:-0.717px;">Clone</div>
<div class="a" style="left:1064px;top:161px;width:67px;height:37px;background:#3aafe7;border-radius:4px;"></div>
<div class="t" style="left:1078.60px;top:171.00px;font-size:17.44px;color:#fff;letter-spacing:-0.086px;">Print</div>
<div class="a" style="left:1141px;top:161px;width:76px;height:37px;background:#3aafe7;border-radius:4px;"></div>
<div class="t" style="left:1155.90px;top:172.00px;font-size:17.44px;color:#fff;letter-spacing:-0.561px;">Delete</div>
<div class="a" style="left:1227px;top:161px;width:108px;height:37px;background:#3aafe7;border-radius:4px;"></div>
<div class="t" style="left:1242.30px;top:172.00px;font-size:17.44px;color:#fff;letter-spacing:-0.593px;">Email Data</div>
<svg class="a" style="left:1369px;top:167px;" width="24" height="24" viewBox="0 0 24 24"><circle cx="12" cy="12" r="10.8" fill="#1e9e33"/><path d="M7 12.3 L10.5 15.5 L17 8.8" stroke="#fff" stroke-width="2.6" fill="none" stroke-linecap="round" stroke-linejoin="round"/></svg>
<div class="t" style="left:1401.50px;top:170.00px;font-size:16.57px;color:#1e9e33;letter-spacing:-0.417px;">Approved</div>
<div class="a" style="left:1499px;top:161px;width:40px;height:37px;border:1px solid #cfcfcf;border-radius:5px;background:#fff;"></div>
<svg class="a" style="left:1506px;top:166px;" width="26" height="26" viewBox="0 0 26 26"><rect x="10.12" y="0.80" width="5.77" height="6.10" rx="1" fill="#999" transform="rotate(0 13 13)"/><rect x="10.12" y="0.80" width="5.77" height="6.10" rx="1" fill="#999" transform="rotate(45 13 13)"/><rect x="10.12" y="0.80" width="5.77" height="6.10" rx="1" fill="#999" transform="rotate(90 13 13)"/><rect x="10.12" y="0.80" width="5.77" height="6.10" rx="1" fill="#999" transform="rotate(135 13 13)"/><rect x="10.12" y="0.80" width="5.77" height="6.10" rx="1" fill="#999" transform="rotate(180 13 13)"/><rect x="10.12" y="0.80" width="5.77" height="6.10" rx="1" fill="#999" transform="rotate(225 13 13)"/><rect x="10.12" y="0.80" width="5.77" height="6.10" rx="1" fill="#999" transform="rotate(270 13 13)"/><rect x="10.12" y="0.80" width="5.77" height="6.10" rx="1" fill="#999" transform="rotate(315 13 13)"/><circle cx="13" cy="13" r="9.52" fill="#999"/><circle cx="13" cy="13" r="4.64" fill="#fff"/></svg>
<div class="a" style="left:290px;top:217px;width:1283px;height:216px;background:#f4f4f4;border-radius:3px;"></div>
<svg class="a" style="left:333px;top:284px;" width="96" height="96" viewBox="0 0 96 96"><defs><clipPath id="avc"><circle cx="48" cy="48" r="48"/></clipPath></defs><circle cx="48" cy="48" r="48" fill="#d3dcdc"/><g clip-path="url(#avc)"><rect x="33.5" y="21" width="28.5" height="36" rx="14" fill="#4b566b"/><path d="M15.5 76 C15.5 68 19 66 27 66 H70 C77 66 80 68 80 76 V100 H15.5 Z" fill="#4b566b"/></g></svg>
<div class="t" style="left:475.50px;top:242.00px;font-size:17.88px;color:#3aafe7;letter-spacing:-0.292px;">OPN-0007 - 770.000</div>
<div class="t" style="left:474.40px;top:283.00px;font-size:15.99px;color:#777;letter-spacing:-0.327px;">Owner :</div>
<div class="t" style="left:474.40px;top:319.00px;font-size:15.99px;color:#777;letter-spacing:-0.981px;">Stage :</div>
<div class="t" style="left:474.40px;top:355.00px;font-size:15.99px;color:#777;letter-spacing:-0.128px;">Probability :</div>
<div class="t" style="left:474.40px;top:391.00px;font-size:15.99px;color:#777;letter-spacing:-0.746px;">Expected Revenue :</div>
<div class="t" style="left:626.30px;top:283.00px;font-size:15.99px;color:#333;letter-spacing:-0.265px;">Walter Davidson</div>
<div class="t" style="left:625.80px;top:320.00px;font-size:15.99px;color:#333;letter-spacing:-0.091px;">Opportunity Analysis</div>
<div class="t" style="left:626.30px;top:358.00px;font-size:15.00px;color:#333;">0</div>
<div class="t" style="left:626.30px;top:390.00px;font-size:15.00px;color:#333;">0</div>
<div class="a" style="left:1429px;top:246px;width:107px;height:34px;border:1px solid #cccccc;border-radius:2px;background:linear-gradient(#ffffff,#ececec);"></div>
<svg class="a" style="left:1441px;top:254px;" width="19" height="19" viewBox="0 0 19 19"><circle cx="9.5" cy="9.5" r="8.6" fill="#1d9a1d"/><path d="M9.5 5 V14 M5 9.5 H14" stroke="#fff" stroke-width="2.6"/></svg>
<div class="t" style="left:1466.80px;top:254.00px;font-size:16.28px;color:#2a2f45;letter-spacing:-0.717px;">Follow</div>
<div class="t" style="left:1406.50px;top:362.00px;font-size:13.08px;color:#a8a8a8;letter-spacing:-0.478px;">Created by :</div>
<div class="t" style="left:1485.30px;top:362.00px;font-size:13.08px;color:#a8a8a8;letter-spacing:-0.407px;">Super User</div>
<div class="t" style="left:1404.30px;top:388.00px;font-size:13.08px;color:#a8a8a8;letter-spacing:-0.626px;">Created On :</div>
<div class="t" style="left:1485.30px;top:388.00px;font-size:13.08px;color:#a8a8a8;letter-spacing:-0.110px;">4 hours ago</div>
<div class="a" style="left:1552px;top:276px;width:50px;height:270px;background:#f0f0f0;border-radius:6px 0 0 0;box-shadow:-1.5px 0 3px rgba(0,0,0,0.22);"></div>
<svg class="a" style="left:1568px;top:292px;" width="26" height="24" viewBox="0 0 26 24"><path d="M3.5 6 V21.5 H14" fill="none" stroke="#3aafe7" stroke-width="1.4"/><rect x="6" y="3" width="14.5" height="16" rx="1" fill="none" stroke="#3aafe7" stroke-width="1.6"/><rect x="10" y="1.2" width="6.5" height="3" rx="1" fill="#3aafe7"/><path d="M8.5 7 H18 M8.5 10 H18 M8.5 13 H15" stroke="#3aafe7" stroke-width="1.3"/><circle cx="19" cy="17.5" r="4.1" fill="#3aafe7"/><path d="M17 17.6 L18.5 19 L21 16.2" stroke="#fff" stroke-width="1.2" fill="none"/></svg>
<svg class="a" style="left:1568px;top:336px;" width="24" height="24" viewBox="0 0 24 24"><path d="M5.2 9.5 A8.3 8.3 0 1 1 7 17.5" fill="none" stroke="#3aafe7" stroke-width="2"/><path d="M1.5 9.5 L5 13.5 L8.8 9.5 Z" fill="#3aafe7"/><path d="M13.5 7 V12.5 H17.5" fill="none" stroke="#3aafe7" stroke-width="2.1"/></svg>
<svg class="a" style="left:1566px;top:388px;" width="24" height="22" viewBox="0 0 24 22"><path d="M1.2 19.6 C3 12 8 6.4 14.7 6.4 V1.8 L23 9.7 L14.7 19 V13.7 C9 13.7 4.5 15.5 1.2 19.6 Z" fill="#3aafe7"/></svg>
<svg class="a" style="left:1567px;top:437px;" width="26" height="26" viewBox="0 0 26 26"><circle cx="13" cy="14" r="9" fill="none" stroke="#3aafe7" stroke-width="2.1"/><path d="M13 9 V14.3 L16.5 16.5" fill="none" stroke="#3aafe7" stroke-width="1.5"/><path d="M3 5.5 L7 2.7 M23 5.5 L19 2.7" stroke="#3aafe7" stroke-width="2.1"/></svg>
<svg class="a" style="left:1566px;top:491px;" width="26" height="20" viewBox="0 0 26 20"><path d="M4.5 6 C1 8 1.2 11.5 4.5 13.5 C7 15 10 15.5 12.5 15.6" fill="none" stroke="#3aafe7" stroke-width="3"/><path d="M11.5 11.8 L16.8 15.6 L11.5 19.4 Z" fill="#3aafe7"/><path d="M20.5 6 C24 8 24 11.5 20.5 13.5 L18.2 14.5" fill="none" stroke="#3aafe7" stroke-width="2.8"/><path d="M17 10.2 L21.5 12.5 L18.6 16.2 Z" fill="#3aafe7"/><text x="6.5" y="8.8" font-size="8.2" font-weight="bold" fill="#3aafe7" font-family="Liberation Sans" letter-spacing="-0.3">360</text><circle cx="21.3" cy="3.5" r="1" fill="none" stroke="#3aafe7" stroke-width="0.7"/></svg>
<svg class="a" style="left:1576px;top:531px;" width="10" height="16" viewBox="0 0 10 16"><path d="M8 1 V15 L1 8 Z" fill="#919191"/></svg>
<div class="a" style="left:1480px;top:546px;width:106px;height:8px;background:#fff;"></div>
<svg class="a" style="left:317px;top:453px;" width="23" height="23" viewBox="0 0 23 23"><circle cx="11.5" cy="11.3" r="9.5" fill="none" stroke="#3aafe7" stroke-width="1.9"/><path d="M11.5 5.8 V16.8 M6 11.3 H17" stroke="#3aafe7" stroke-width="1.9"/></svg>
<div class="t" style="left:351.60px;top:457.00px;font-size:14.53px;color:#3aafe7;letter-spacing:-0.632px;">SHOW DETAILS</div>
<div class="a" style="left:318px;top:491px;width:1234px;height:1px;background:#cfcfcf;"></div>
<svg class="a" style="left:290px;top:511px;" width="24" height="24" viewBox="0 0 24 24"><path d="M2.5 14 L12.5 3 L20.5 2.5 L21 10.5 L10.5 21.5 Z" fill="none" stroke="#666" stroke-width="1.3" stroke-linejoin="round"/><circle cx="16.2" cy="7" r="1.6" fill="none" stroke="#666" stroke-width="1.1"/></svg>
<div class="t" style="left:320.10px;top:516.00px;font-size:12.94px;color:#333;letter-spacing:-0.209px;">Tags</div>
<div class="a" style="left:368.8px;top:519.5px;width:1.9px;height:2px;background:#333;"></div>
<div class="a" style="left:368.8px;top:523.8px;width:1.9px;height:2px;background:#333;"></div>
<div class="a" style="left:388px;top:509px;width:156px;height:29px;border:1px solid #cfcfcf;border-radius:3px;background:#fff;"></div>
<div class="a" style="left:515.5px;top:510px;width:28px;height:27px;background:#efefef;border-left:1px solid #cfcfcf;border-radius:0 2px 2px 0;"></div>
<div class="t" style="left:398.00px;top:516.00px;font-size:13.08px;color:#c6c6c6;letter-spacing:-0.277px;">Add tags</div>
<svg class="a" style="left:522px;top:515px;" width="16" height="16" viewBox="0 0 16 16"><path d="M8 2 V14 M2 8 H14" stroke="#666" stroke-width="2.6"/></svg>
<div class="a" style="left:553.5px;top:509px;width:132px;height:29px;border:1.5px solid #3ab5e9;border-radius:4px;background:#f1f1f1;"></div>
<div class="t" style="left:564.60px;top:517.00px;font-size:13.08px;color:#333;letter-spacing:-0.484px;">Related Modules</div>
<svg class="a" style="left:668px;top:520.5px;" width="8" height="8" viewBox="0 0 8 8"><path d="M1 1 L7 7 M7 1 L1 7" stroke="#777" stroke-width="1.3"/></svg>
<div class="a" style="left:693.5px;top:509px;width:107px;height:29px;border:1.5px solid #3ab5e9;border-radius:4px;background:#f1f1f1;"></div>
<div class="t" style="left:704.00px;top:517.00px;font-size:13.08px;color:#333;letter-spacing:-0.441px;">View Contact</div>
<svg class="a" style="left:785.5px;top:521px;" width="8" height="8" viewBox="0 0 8 8"><path d="M1 1 L7 7 M7 1 L1 7" stroke="#777" stroke-width="1.3"/></svg>
<div class="a" style="left:290px;top:554px;width:1291px;height:46px;background:#ececec;"></div>
<div class="a" style="left:290px;top:595px;width:137px;height:5px;background:#3aafe7;"></div>
<div class="t" style="left:313.50px;top:568.00px;font-size:16.42px;color:#2c3e50;letter-spacing:-0.161px;-webkit-text-stroke:0.45px #2c3e50;">Related Lists</div>
<div class="t" style="left:451.30px;top:568.00px;font-size:16.42px;color:#222;letter-spacing:-0.486px;">Activity Stream</div>
<svg class="a" style="left:799px;top:163px;z-index:20" width="28" height="28" viewBox="0 0 28 28"><circle cx="14" cy="14" r="13.6" fill="#2f6fff"/></svg>
<div class="t" style="left:808.70px;top:167.00px;font-size:20.50px;color:#fff;z-index:21;-webkit-text-stroke:0.9px #fff;">1</div>
<svg class="a" style="left:839px;top:168px;z-index:20" width="59" height="18" viewBox="0 0 59 18"><path d="M0 9 H46" stroke="#2f6fff" stroke-width="3"/><path d="M44 1 L58 9 L44 17 Z" fill="#2f6fff"/></svg>
<svg class="a" style="left:1007.5px;top:200px;z-index:20" width="18" height="59" viewBox="0 0 18 59"><path d="M9 12 V58" stroke="#2f6fff" stroke-width="3"/><path d="M0.8 13.5 L9 0 L17.2 13.5 Z" fill="#2f6fff"/></svg>
<svg class="a" style="left:1087.5px;top:200px;z-index:20" width="18" height="59" viewBox="0 0 18 59"><path d="M9 12 V58" stroke="#2f6fff" stroke-width="3"/><path d="M0.8 13.5 L9 0 L17.2 13.5 Z" fill="#2f6fff"/></svg>
<svg class="a" style="left:1168px;top:200px;z-index:20" width="18" height="59" viewBox="0 0 18 59"><path d="M9 12 V58" stroke="#2f6fff" stroke-width="3"/><path d="M0.8 13.5 L9 0 L17.2 13.5 Z" fill="#2f6fff"/></svg>
<svg class="a" style="left:1259.4px;top:200px;z-index:20" width="18" height="59" viewBox="0 0 18 59"><path d="M9 12 V58" stroke="#2f6fff" stroke-width="3"/><path d="M0.8 13.5 L9 0 L17.2 13.5 Z" fill="#2f6fff"/></svg>
<svg class="a" style="left:1003.4px;top:266.3px;z-index:20" width="28" height="28" viewBox="0 0 28 28"><circle cx="14" cy="14" r="13.6" fill="#2f6fff"/></svg>
<div class="t" style="left:1013.10px;top:271.00px;font-size:20.50px;color:#fff;z-index:21;-webkit-text-stroke:0.9px #fff;">3</div>
<svg class="a" style="left:1084.4px;top:266.3px;z-index:20" width="28" height="28" viewBox="0 0 28 28"><circle cx="14" cy="14" r="13.6" fill="#2f6fff"/></svg>
<div class="t" style="left:1094.10px;top:271.00px;font-size:20.50px;color:#fff;z-index:21;-webkit-text-stroke:0.9px #fff;">8</div>
<svg class="a" style="left:1161.5px;top:276.6px;z-index:20" width="28" height="28" viewBox="0 0 28 28"><circle cx="14" cy="14" r="13.6" fill="#2f6fff"/></svg>
<div class="t" style="left:1171.20px;top:281.00px;font-size:20.50px;color:#fff;z-index:21;-webkit-text-stroke:0.9px #fff;">2</div>
<svg class="a" style="left:1252.3px;top:276.6px;z-index:20" width="28" height="28" viewBox="0 0 28 28"><circle cx="14" cy="14" r="13.6" fill="#2f6fff"/></svg>
<div class="t" style="left:1262.00px;top:281.00px;font-size:20.50px;color:#fff;z-index:21;-webkit-text-stroke:0.9px #fff;">9</div>
<svg class="a" style="left:541.4px;top:437.3px;z-index:20" width="28" height="28" viewBox="0 0 28 28"><circle cx="14" cy="14" r="13.6" fill="#2f6fff"/></svg>
<div class="t" style="left:551.10px;top:442.00px;font-size:20.50px;color:#fff;z-index:21;-webkit-text-stroke:0.9px #fff;">4</div>
<svg class="a" style="left:468px;top:451.3px;z-index:20" width="59" height="18" viewBox="0 0 59 18"><path d="M12 9 H58" stroke="#2f6fff" stroke-width="3"/><path d="M14 1 L0 9 L14 17 Z" fill="#2f6fff"/></svg>
<svg class="a" style="left:334.6px;top:467.7px;z-index:20" width="28" height="28" viewBox="0 0 28 28"><circle cx="14" cy="14" r="13.6" fill="#2f6fff"/></svg>
<div class="t" style="left:344.30px;top:472.00px;font-size:20.50px;color:#fff;z-index:21;-webkit-text-stroke:0.9px #fff;">6</div>
<svg class="a" style="left:341.5px;top:503px;z-index:20" width="18" height="59" viewBox="0 0 18 59"><path d="M9 0 V46" stroke="#2f6fff" stroke-width="3"/><path d="M0.8 44.5 L9 58 L17.2 44.5 Z" fill="#2f6fff"/></svg>
<svg class="a" style="left:621.6px;top:498.5px;z-index:20" width="28" height="28" viewBox="0 0 28 28"><circle cx="14" cy="14" r="13.6" fill="#2f6fff"/></svg>
<div class="t" style="left:631.30px;top:503.00px;font-size:20.50px;color:#fff;z-index:21;-webkit-text-stroke:0.9px #fff;">5</div>
<svg class="a" style="left:550px;top:509.29999999999995px;z-index:20" width="58.5" height="18" viewBox="0 0 58.5 18"><path d="M12 9 H57.5" stroke="#2f6fff" stroke-width="3"/><path d="M14 1 L0 9 L14 17 Z" fill="#2f6fff"/></svg>
<svg class="a" style="left:634px;top:556.5px;z-index:20" width="28" height="28" viewBox="0 0 28 28"><circle cx="14" cy="14" r="13.6" fill="#2f6fff"/></svg>
<div class="t" style="left:643.70px;top:561.00px;font-size:20.50px;color:#fff;z-index:21;-webkit-text-stroke:0.9px #fff;">7</div>
<svg class="a" style="left:560px;top:568px;z-index:20" width="59" height="18" viewBox="0 0 59 18"><path d="M12 9 H58" stroke="#2f6fff" stroke-width="3"/><path d="M14 1 L0 9 L14 17 Z" fill="#2f6fff"/></svg>
<div class="a" style="left:292px;top:623px;width:1286px;height:48px;background:#ededed;"></div>
<div class="t" style="left:307.50px;top:638.00px;font-size:17.44px;color:#333;letter-spacing:-0.356px;">Open Activities</div>
<div class="a" style="left:1428px;top:626.6px;width:97px;height:40px;background:#fff;border:1px solid #e3e3e3;border-radius:5px;"></div>
<div class="t" style="left:1439.20px;top:638.00px;font-size:17.44px;color:#333;letter-spacing:-0.368px;">Actions</div>
<svg class="a" style="left:1504px;top:644.6px;" width="11" height="7" viewBox="0 0 11 7"><path d="M1 1 H10 L5.5 6 Z" fill="#777"/></svg>
<div class="a" style="left:292px;top:671px;width:1286px;height:36px;background:#fff;"></div>
<div class="a" style="left:292px;top:707px;width:1286px;height:4px;background:linear-gradient(#e7e7e7,#fbfbfb);"></div>
<div class="a" style="left:292px;top:671px;width:1px;height:36px;background:#f5f5f5;"></div>
<div class="t" style="left:874.60px;top:684.00px;font-size:14.53px;color:#ababab;letter-spacing:0.243px;">No record Display</div>
<div class="a" style="left:292px;top:724px;width:1286px;height:48px;background:#ededed;"></div>
<div class="t" style="left:307.50px;top:739.00px;font-size:17.44px;color:#333;letter-spacing:-0.070px;">Document</div>
<div class="a" style="left:1428px;top:727.6px;width:97px;height:40px;background:#fff;border:1px solid #e3e3e3;border-radius:5px;"></div>
<div class="t" style="left:1439.20px;top:739.00px;font-size:17.44px;color:#333;letter-spacing:-0.368px;">Actions</div>
<svg class="a" style="left:1504px;top:745.6px;" width="11" height="7" viewBox="0 0 11 7"><path d="M1 1 H10 L5.5 6 Z" fill="#777"/></svg>
<div class="a" style="left:292px;top:772px;width:1286px;height:36px;background:#fff;"></div>
<div class="a" style="left:292px;top:808px;width:1286px;height:4px;background:linear-gradient(#e7e7e7,#fbfbfb);"></div>
<div class="a" style="left:292px;top:772px;width:1px;height:36px;background:#f5f5f5;"></div>
<div class="t" style="left:874.60px;top:785.00px;font-size:14.53px;color:#ababab;letter-spacing:0.243px;">No record Display</div>
<div class="a" style="left:292px;top:828px;width:1286px;height:47.700000000000045px;background:#ededed;"></div>
<div class="t" style="left:307.50px;top:843.00px;font-size:17.44px;color:#333;letter-spacing:-0.392px;">Closed Activities</div>
<div class="a" style="left:1428px;top:831.6px;width:97px;height:40px;background:#fff;border:1px solid #e3e3e3;border-radius:5px;"></div>
<div class="t" style="left:1439.20px;top:843.00px;font-size:17.44px;color:#333;letter-spacing:-0.368px;">Actions</div>
<svg class="a" style="left:1504px;top:849.6px;" width="11" height="7" viewBox="0 0 11 7"><path d="M1 1 H10 L5.5 6 Z" fill="#777"/></svg>
<div class="a" style="left:292px;top:875.7px;width:1286px;height:36.299999999999955px;background:#fff;"></div>
<div class="a" style="left:292px;top:912px;width:1286px;height:4px;background:linear-gradient(#e7e7e7,#fbfbfb);"></div>
<div class="a" style="left:292px;top:875.7px;width:1px;height:36.299999999999955px;background:#f5f5f5;"></div>
<div class="t" style="left:874.60px;top:889.00px;font-size:14.53px;color:#ababab;letter-spacing:0.243px;">No record Display</div>
<div class="a" style="left:292px;top:934px;width:1286px;height:47.60000000000002px;background:#ededed;"></div>
<div class="t" style="left:307.50px;top:950.00px;font-size:17.44px;color:#333;letter-spacing:-0.479px;">Contacts</div>
<div class="a" style="left:1428px;top:937.6px;width:97px;height:40px;background:#fff;border:1px solid #e3e3e3;border-radius:5px;"></div>
<div class="t" style="left:1439.20px;top:949.00px;font-size:17.44px;color:#333;letter-spacing:-0.368px;">Actions</div>
<svg class="a" style="left:1504px;top:955.6px;" width="11" height="7" viewBox="0 0 11 7"><path d="M1 1 H10 L5.5 6 Z" fill="#777"/></svg>
<div class="a" style="left:292px;top:981.6px;width:1286px;height:36.39999999999998px;background:#fff;"></div>
<div class="a" style="left:292px;top:1018px;width:1286px;height:4px;background:linear-gradient(#e7e7e7,#fbfbfb);"></div>
<div class="a" style="left:292px;top:981.6px;width:1px;height:36.39999999999998px;background:#f5f5f5;"></div>
<div class="t" style="left:874.60px;top:995.00px;font-size:14.53px;color:#ababab;letter-spacing:0.243px;">No record Display</div>
<div class="a" style="left:292px;top:1035px;width:1286px;height:47.5px;background:#ededed;"></div>
<div class="t" style="left:307.50px;top:1050.00px;font-size:17.44px;color:#333;letter-spacing:-0.467px;">Notes</div>
<div class="a" style="left:1428px;top:1038.6px;width:97px;height:40px;background:#fff;border:1px solid #e3e3e3;border-radius:5px;"></div>
<div class="t" style="left:1439.20px;top:1050.00px;font-size:17.44px;color:#333;letter-spacing:-0.368px;">Actions</div>
<svg class="a" style="left:1504px;top:1056.6px;" width="11" height="7" viewBox="0 0 11 7"><path d="M1 1 H10 L5.5 6 Z" fill="#777"/></svg>
<div class="a" style="left:292px;top:1082.5px;width:1286px;height:36.5px;background:#fff;"></div>
<div class="a" style="left:292px;top:1119px;width:1286px;height:4px;background:linear-gradient(#e7e7e7,#fbfbfb);"></div>
<div class="a" style="left:292px;top:1082.5px;width:1px;height:36.5px;background:#f5f5f5;"></div>
<div class="t" style="left:874.60px;top:1096.00px;font-size:14.53px;color:#ababab;letter-spacing:0.243px;">No record Display</div>
<div class="a" style="left:292px;top:1541.2px;width:1286px;height:47.799999999999955px;background:#ededed;"></div>
<div class="t" style="left:307.50px;top:1556.00px;font-size:17.44px;color:#333;letter-spacing:-0.691px;">Pick List</div>
<div class="a" style="left:1428px;top:1544.8px;width:97px;height:40px;background:#fff;border:1px solid #e3e3e3;border-radius:5px;"></div>
<div class="t" style="left:1439.20px;top:1556.00px;font-size:17.44px;color:#333;letter-spacing:-0.368px;">Actions</div>
<svg class="a" style="left:1504px;top:1562.8px;" width="11" height="7" viewBox="0 0 11 7"><path d="M1 1 H10 L5.5 6 Z" fill="#777"/></svg>
<div class="a" style="left:292px;top:1589px;width:1286px;height:35.299999999999955px;background:#fff;"></div>
<div class="a" style="left:292px;top:1624.3px;width:1286px;height:4px;background:linear-gradient(#e7e7e7,#fbfbfb);"></div>
<div class="a" style="left:292px;top:1589px;width:1px;height:35.299999999999955px;background:#f5f5f5;"></div>
<div class="t" style="left:874.60px;top:1602.00px;font-size:14.53px;color:#ababab;letter-spacing:0.243px;">No record Display</div>
<div class="a" style="left:292px;top:1865px;width:1286px;height:47.59999999999991px;background:#ededed;"></div>
<div class="t" style="left:307.50px;top:1880.00px;font-size:17.44px;color:#333;letter-spacing:-0.765px;">Emails</div>
<div class="a" style="left:1428px;top:1868.6px;width:97px;height:40px;background:#fff;border:1px solid #e3e3e3;border-radius:5px;"></div>
<div class="t" style="left:1439.20px;top:1880.00px;font-size:17.44px;color:#333;letter-spacing:-0.368px;">Actions</div>
<svg class="a" style="left:1504px;top:1886.6px;" width="11" height="7" viewBox="0 0 11 7"><path d="M1 1 H10 L5.5 6 Z" fill="#777"/></svg>
<div class="a" style="left:292px;top:1912.6px;width:1286px;height:36.600000000000136px;background:#fff;"></div>
<div class="a" style="left:292px;top:1949.2px;width:1286px;height:4px;background:linear-gradient(#e7e7e7,#fbfbfb);"></div>
<div class="a" style="left:292px;top:1912.6px;width:1px;height:36.600000000000136px;background:#f5f5f5;"></div>
<div class="t" style="left:874.60px;top:1926.00px;font-size:14.53px;color:#ababab;letter-spacing:0.243px;">No record Display</div>
<div class="a" style="left:292px;top:1966.2px;width:1286px;height:47.799999999999955px;background:#ededed;"></div>
<div class="t" style="left:307.50px;top:1981.00px;font-size:17.44px;color:#333;letter-spacing:-0.283px;">Stage History</div>
<div class="a" style="left:1428px;top:1969.8px;width:97px;height:40px;background:#fff;border:1px solid #e3e3e3;border-radius:5px;"></div>
<div class="t" style="left:1439.20px;top:1981.00px;font-size:17.44px;color:#333;letter-spacing:-0.368px;">Actions</div>
<svg class="a" style="left:1504px;top:1987.8px;" width="11" height="7" viewBox="0 0 11 7"><path d="M1 1 H10 L5.5 6 Z" fill="#777"/></svg>
<div class="a" style="left:292px;top:2014px;width:1286px;height:36px;background:#fff;"></div>
<div class="a" style="left:292px;top:2050px;width:1286px;height:4px;background:linear-gradient(#e7e7e7,#fbfbfb);"></div>
<div class="a" style="left:292px;top:2014px;width:1px;height:36px;background:#f5f5f5;"></div>
<div class="t" style="left:874.60px;top:2027.00px;font-size:14.53px;color:#ababab;letter-spacing:0.243px;">No record Display</div>
<div class="a" style="left:293px;top:1133px;width:1288px;height:162px;border:1px solid #cdcdcd;background:#fff;"></div>
<div class="a" style="left:294px;top:1134px;width:1286px;height:48px;background:#ededed;"></div>
<div class="t" style="left:309.50px;top:1150.00px;font-size:16.72px;color:#333;letter-spacing:0.163px;">Quote</div>
<div class="a" style="left:1429.5px;top:1137.4px;width:97px;height:40px;background:#fff;border:1px solid #e3e3e3;border-radius:5px;"></div>
<div class="t" style="left:1440.70px;top:1149.00px;font-size:17.44px;color:#333;letter-spacing:-0.368px;">Actions</div>
<svg class="a" style="left:1505.5px;top:1155.4px;" width="11" height="7" viewBox="0 0 11 7"><path d="M1 1 H10 L5.5 6 Z" fill="#777"/></svg>
<div class="a" style="left:302px;top:1190px;width:1267px;height:92px;background:#fff;border:1px solid #dedede;"></div>
<div class="a" style="left:302px;top:1190px;width:1267px;height:47.5px;background:#e1e0e1;"></div>
<div class="a" style="left:302px;top:1237.5px;width:1267px;height:1px;background:#e3e3e3;"></div>
<div class="a" style="left:374.4px;top:1190px;width:1px;height:92px;background:#e3e3e3;"></div>
<div class="a" style="left:609.2px;top:1190px;width:1px;height:92px;background:#e3e3e3;"></div>
<div class="a" style="left:840px;top:1190px;width:1px;height:92px;background:#e3e3e3;"></div>
<div class="a" style="left:1071.5px;top:1190px;width:1px;height:92px;background:#e3e3e3;"></div>
<div class="a" style="left:1441px;top:1190px;width:1px;height:92px;background:#e3e3e3;"></div>
<div class="t" style="left:314.00px;top:1205.00px;font-size:15.41px;color:#333;letter-spacing:-0.166px;">Action</div>
<div class="t" style="left:383.70px;top:1204.00px;font-size:15.41px;color:#333;letter-spacing:0.071px;">Quote Name</div>
<div class="t" style="left:623.50px;top:1206.00px;font-size:15.41px;color:#333;letter-spacing:-0.057px;">Expiry date</div>
<div class="t" style="left:853.70px;top:1206.00px;font-size:15.41px;color:#333;letter-spacing:-0.105px;">Approval Status</div>
<div class="t" style="left:1085.00px;top:1206.00px;font-size:15.41px;color:#333;letter-spacing:-0.330px;">Sync Type</div>
<div class="t" style="left:1455.00px;top:1206.00px;font-size:15.41px;color:#333;letter-spacing:0.319px;">Total Amount</div>
<svg class="a" style="left:319px;top:1253.5px;" width="14" height="14" viewBox="0 0 14 14"><path d="M2.3 9.6 L9.3 2.6 L11.5 4.8 L4.5 11.8 Z" fill="#6f7d8c"/><path d="M9.9 2 L10.8 1.1 C11.2 0.7 11.8 0.7 12.2 1.1 L13 1.9 C13.4 2.3 13.4 2.9 13 3.3 L12.1 4.2 Z" fill="#6f7d8c"/><path d="M1.8 10.2 L4 12.3 L1 13.2 Z" fill="#6f7d8c"/></svg>
<svg class="a" style="left:341.2px;top:1252px;" width="18" height="18" viewBox="0 0 18 18"><circle cx="9" cy="9" r="7.2" fill="none" stroke="#e5493a" stroke-width="1.9"/><path d="M6.3 6.3 L11.7 11.7 M11.7 6.3 L6.3 11.7" stroke="#e5493a" stroke-width="2"/></svg>
<div class="t" style="left:391.50px;top:1251.00px;font-size:15.99px;color:#333;letter-spacing:-0.606px;">OPN-0004</div>
<div class="t" style="left:622.00px;top:1251.00px;font-size:15.99px;color:#333;letter-spacing:-0.214px;">Apr 30 2020</div>
<div class="a" style="left:847px;top:1242.3px;width:107px;height:36.5px;background:#5bd7aa;border-radius:4px;"></div>
<div class="t" style="left:868.00px;top:1252.00px;font-size:15.99px;color:#2a2a2a;letter-spacing:-0.347px;">Approved</div>
<div class="t" style="left:1086.00px;top:1251.00px;font-size:15.99px;color:#f39322;letter-spacing:-0.132px;">Sync and Overwrite Opportunity Products&lt;br&gt;</div>
<div class="t" style="left:1455.60px;top:1251.00px;font-size:15.99px;color:#f39322;letter-spacing:-0.016px;">462.000</div>
<div class="a" style="left:293px;top:1325px;width:1288px;height:204px;border:1px solid #cdcdcd;border-top:none;background:#fff;"></div>
<div class="a" style="left:292px;top:1325px;width:1286px;height:47.5px;background:#ededed;"></div>
<div class="t" style="left:307.40px;top:1341.00px;font-size:16.72px;color:#333;letter-spacing:-0.278px;">Sales Order</div>
<div class="a" style="left:1427.7px;top:1328.7px;width:97px;height:40px;background:#fff;border:1px solid #e3e3e3;border-radius:5px;"></div>
<div class="t" style="left:1438.90px;top:1340.00px;font-size:17.44px;color:#333;letter-spacing:-0.368px;">Actions</div>
<svg class="a" style="left:1503.7px;top:1346.7px;" width="11" height="7" viewBox="0 0 11 7"><path d="M1 1 H10 L5.5 6 Z" fill="#777"/></svg>
<div class="a" style="left:302.5px;top:1382px;width:1266.5px;height:137.29999999999995px;background:#fff;border:1px solid #dedede;"></div>
<div class="a" style="left:302.5px;top:1382px;width:1266.5px;height:47.59999999999991px;background:#e1e0e1;"></div>
<div class="a" style="left:302.5px;top:1429.6px;width:1266.5px;height:1px;background:#e3e3e3;"></div>
<div class="a" style="left:302.5px;top:1474.7px;width:1266.5px;height:1px;background:#e3e3e3;"></div>
<div class="a" style="left:374.4px;top:1382px;width:1px;height:137.29999999999995px;background:#e3e3e3;"></div>
<div class="a" style="left:610.6px;top:1382px;width:1px;height:137.29999999999995px;background:#e3e3e3;"></div>
<div class="a" style="left:821.5px;top:1382px;width:1px;height:137.29999999999995px;background:#e3e3e3;"></div>
<div class="a" style="left:1140.9px;top:1382px;width:1px;height:137.29999999999995px;background:#e3e3e3;"></div>
<div class="t" style="left:314.00px;top:1397.00px;font-size:15.41px;color:#333;letter-spacing:-0.166px;">Action</div>
<div class="t" style="left:384.40px;top:1396.00px;font-size:15.41px;color:#333;letter-spacing:-0.316px;">Sales  Order</div>
<div class="t" style="left:624.00px;top:1398.00px;font-size:15.41px;color:#333;letter-spacing:-0.055px;">Approval Status</div>
<div class="t" style="left:834.60px;top:1398.00px;font-size:15.41px;color:#333;letter-spacing:0.213px;">Description</div>
<div class="t" style="left:1154.50px;top:1398.00px;font-size:15.41px;color:#333;letter-spacing:-0.330px;">Sync Type</div>
<svg class="a" style="left:319px;top:1446.1px;" width="14" height="14" viewBox="0 0 14 14"><path d="M2.3 9.6 L9.3 2.6 L11.5 4.8 L4.5 11.8 Z" fill="#6f7d8c"/><path d="M9.9 2 L10.8 1.1 C11.2 0.7 11.8 0.7 12.2 1.1 L13 1.9 C13.4 2.3 13.4 2.9 13 3.3 L12.1 4.2 Z" fill="#6f7d8c"/><path d="M1.8 10.2 L4 12.3 L1 13.2 Z" fill="#6f7d8c"/></svg>
<svg class="a" style="left:341px;top:1444.0px;" width="18" height="18" viewBox="0 0 18 18"><circle cx="9" cy="9" r="7.2" fill="none" stroke="#e5493a" stroke-width="1.9"/><path d="M6.3 6.3 L11.7 11.7 M11.7 6.3 L6.3 11.7" stroke="#e5493a" stroke-width="2"/></svg>
<div class="t" style="left:391.30px;top:1443.00px;font-size:15.99px;color:#333;letter-spacing:-0.749px;">SO-0029</div>
<div class="a" style="left:617px;top:1434.0px;width:107px;height:37px;background:#5bd7aa;border-radius:4px;"></div>
<div class="t" style="left:638.00px;top:1444.00px;font-size:15.99px;color:#2a2a2a;letter-spacing:-0.347px;">Approved</div>
<div class="t" style="left:1155.40px;top:1443.00px;font-size:15.99px;color:#333;letter-spacing:-0.092px;">Do not Sync with Opportunity Products</div>
<svg class="a" style="left:319px;top:1491.2px;" width="14" height="14" viewBox="0 0 14 14"><path d="M2.3 9.6 L9.3 2.6 L11.5 4.8 L4.5 11.8 Z" fill="#6f7d8c"/><path d="M9.9 2 L10.8 1.1 C11.2 0.7 11.8 0.7 12.2 1.1 L13 1.9 C13.4 2.3 13.4 2.9 13 3.3 L12.1 4.2 Z" fill="#6f7d8c"/><path d="M1.8 10.2 L4 12.3 L1 13.2 Z" fill="#6f7d8c"/></svg>
<svg class="a" style="left:341px;top:1489.1000000000001px;" width="18" height="18" viewBox="0 0 18 18"><circle cx="9" cy="9" r="7.2" fill="none" stroke="#e5493a" stroke-width="1.9"/><path d="M6.3 6.3 L11.7 11.7 M11.7 6.3 L6.3 11.7" stroke="#e5493a" stroke-width="2"/></svg>
<div class="t" style="left:391.30px;top:1488.00px;font-size:15.99px;color:#333;letter-spacing:-0.749px;">SO-0007</div>
<div class="a" style="left:617px;top:1479.1000000000001px;width:107px;height:37px;background:#5bd7aa;border-radius:4px;"></div>
<div class="t" style="left:638.00px;top:1489.00px;font-size:15.99px;color:#2a2a2a;letter-spacing:-0.347px;">Approved</div>
<div class="t" style="left:1155.40px;top:1488.00px;font-size:15.99px;color:#333;letter-spacing:-0.128px;">Sync and Overwrite Opportunity Products</div>
<div class="a" style="left:293px;top:1646px;width:1288px;height:204px;border:1px solid #cdcdcd;border-top:none;background:#fff;"></div>
<div class="a" style="left:292px;top:1646px;width:1286px;height:47.7px;background:#ededed;"></div>
<div class="t" style="left:307.20px;top:1661.00px;font-size:17.44px;color:#333;letter-spacing:-0.275px;">Delivery Note</div>
<div class="a" style="left:1428px;top:1649.6px;width:97px;height:40px;background:#fff;border:1px solid #e3e3e3;border-radius:5px;"></div>
<div class="t" style="left:1439.20px;top:1661.00px;font-size:17.44px;color:#333;letter-spacing:-0.368px;">Actions</div>
<svg class="a" style="left:1504px;top:1667.6px;" width="11" height="7" viewBox="0 0 11 7"><path d="M1 1 H10 L5.5 6 Z" fill="#777"/></svg>
<div class="a" style="left:302.4px;top:1703px;width:1266.1px;height:137.20000000000005px;background:#fff;border:1px solid #dedede;"></div>
<div class="a" style="left:302.4px;top:1703px;width:1266.1px;height:47.59999999999991px;background:#e1e0e1;"></div>
<div class="a" style="left:302.4px;top:1750.6px;width:1266.1px;height:1px;background:#e3e3e3;"></div>
<div class="a" style="left:302.4px;top:1795px;width:1266.1px;height:1px;background:#e3e3e3;"></div>
<div class="a" style="left:374.6px;top:1703px;width:1px;height:137.20000000000005px;background:#e3e3e3;"></div>
<div class="a" style="left:610.6px;top:1703px;width:1px;height:137.20000000000005px;background:#e3e3e3;"></div>
<div class="a" style="left:1141.4px;top:1703px;width:1px;height:137.20000000000005px;background:#e3e3e3;"></div>
<div class="t" style="left:314.00px;top:1718.00px;font-size:15.41px;color:#333;letter-spacing:-0.166px;">Action</div>
<div class="t" style="left:384.00px;top:1718.00px;font-size:15.41px;color:#333;letter-spacing:0.037px;">Delivery Note No</div>
<div class="t" style="left:623.80px;top:1720.00px;font-size:15.41px;color:#333;letter-spacing:-0.153px;">Created by</div>
<div class="t" style="left:1154.80px;top:1720.00px;font-size:15.41px;color:#333;letter-spacing:-0.154px;">Created date</div>
<svg class="a" style="left:319px;top:1767.1px;" width="14" height="14" viewBox="0 0 14 14"><path d="M2.3 9.6 L9.3 2.6 L11.5 4.8 L4.5 11.8 Z" fill="#6f7d8c"/><path d="M9.9 2 L10.8 1.1 C11.2 0.7 11.8 0.7 12.2 1.1 L13 1.9 C13.4 2.3 13.4 2.9 13 3.3 L12.1 4.2 Z" fill="#6f7d8c"/><path d="M1.8 10.2 L4 12.3 L1 13.2 Z" fill="#6f7d8c"/></svg>
<svg class="a" style="left:341px;top:1764.6px;" width="18" height="18" viewBox="0 0 18 18"><circle cx="9" cy="9" r="7.2" fill="none" stroke="#e5493a" stroke-width="1.9"/><path d="M6.3 6.3 L11.7 11.7 M11.7 6.3 L6.3 11.7" stroke="#e5493a" stroke-width="2"/></svg>
<div class="t" style="left:391.60px;top:1764.00px;font-size:15.99px;color:#333;letter-spacing:-0.416px;">DN-0024</div>
<div class="t" style="left:625.50px;top:1764.00px;font-size:15.99px;color:#333;letter-spacing:-0.462px;">Super User</div>
<div class="t" style="left:1156.50px;top:1764.00px;font-size:15.99px;color:#333;letter-spacing:-0.175px;">May 02 2019</div>
<svg class="a" style="left:319px;top:1811.5px;" width="14" height="14" viewBox="0 0 14 14"><path d="M2.3 9.6 L9.3 2.6 L11.5 4.8 L4.5 11.8 Z" fill="#6f7d8c"/><path d="M9.9 2 L10.8 1.1 C11.2 0.7 11.8 0.7 12.2 1.1 L13 1.9 C13.4 2.3 13.4 2.9 13 3.3 L12.1 4.2 Z" fill="#6f7d8c"/><path d="M1.8 10.2 L4 12.3 L1 13.2 Z" fill="#6f7d8c"/></svg>
<svg class="a" style="left:341px;top:1809px;" width="18" height="18" viewBox="0 0 18 18"><circle cx="9" cy="9" r="7.2" fill="none" stroke="#e5493a" stroke-width="1.9"/><path d="M6.3 6.3 L11.7 11.7 M11.7 6.3 L6.3 11.7" stroke="#e5493a" stroke-width="2"/></svg>
<div class="t" style="left:391.60px;top:1808.00px;font-size:15.99px;color:#333;letter-spacing:-0.416px;">DN-0025</div>
<div class="t" style="left:625.50px;top:1808.00px;font-size:15.99px;color:#333;letter-spacing:-0.462px;">Super User</div>
<div class="t" style="left:1156.50px;top:1808.00px;font-size:15.99px;color:#333;letter-spacing:-0.175px;">May 02 2019</div>
</body></html>
